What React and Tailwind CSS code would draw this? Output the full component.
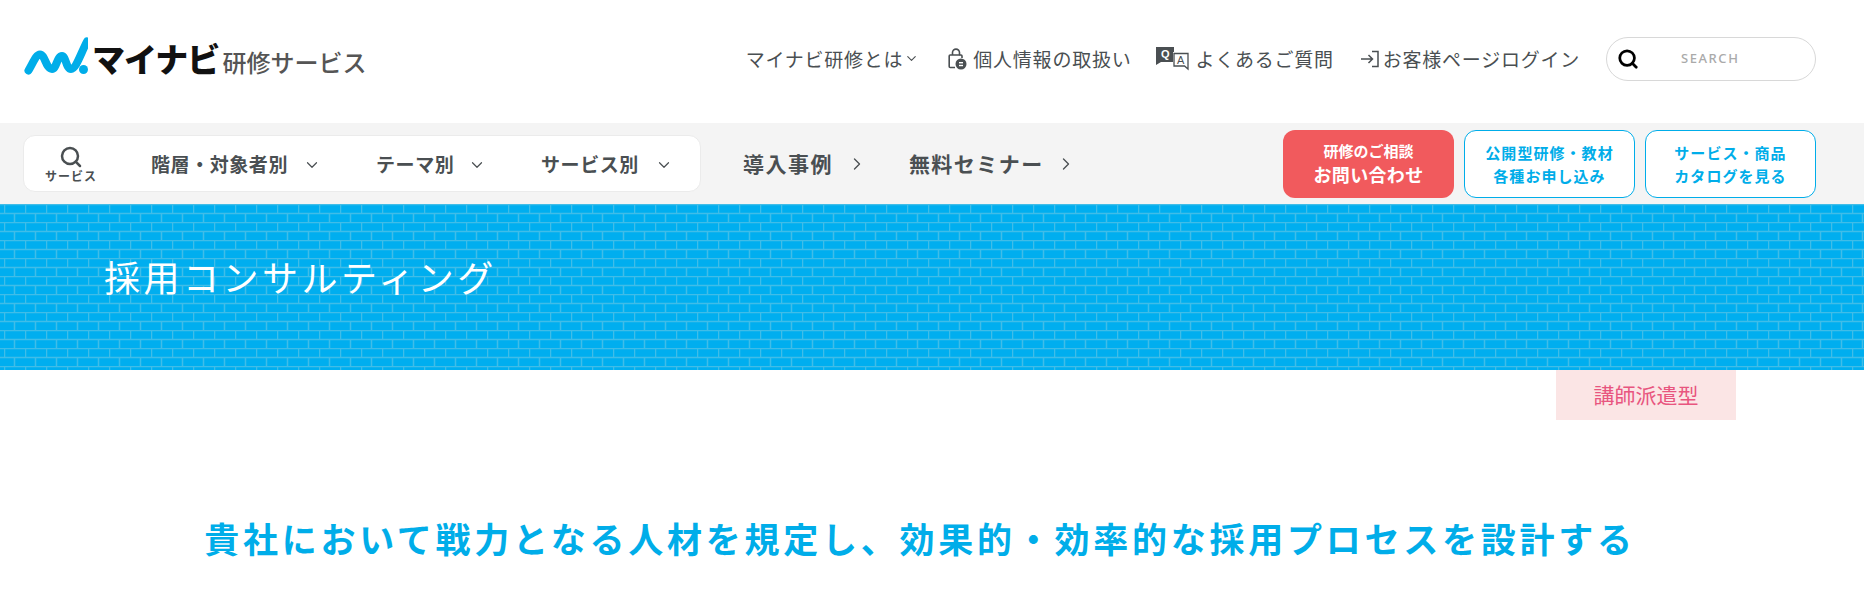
import React from "react";
import { Search, ChevronDown, ChevronRight } from "lucide-react";

function Logo() {
  return (
    <svg width="66" height="48" viewBox="20 36 66 48" className="shrink-0 mb-[3px]">
      <path d="M26.5 73.5 C31 66 34 57.5 38 57.5 C43 57.5 44 72 50 72 C54.5 72 55 59 60 59 C64 59 64 72 69 72 C74 72 79 56 85 44.5" fill="none" stroke="#00ade9" strokeWidth="8" strokeLinecap="round" strokeLinejoin="round" />
      <circle cx="81.5" cy="72.5" r="4.5" fill="#00ade9" />
    </svg>
  );
}

function LockIcon() {
  return (
    <svg width="20" height="22" viewBox="0 0 20 22" className="shrink-0">
      <path d="M8 7H3.2a1 1 0 0 0-1 1v10.5a1 1 0 0 0 1 1H8" fill="none" stroke="#4a4f52" strokeWidth="1.6" />
      <path d="M5.5 7V4.6a3.5 3.5 0 0 1 7 0V7H8" fill="none" stroke="#4a4f52" strokeWidth="1.6" />
      <path d="M12.5 7h1.5a1 1 0 0 1 1 1v2" fill="none" stroke="#4a4f52" strokeWidth="1.6" />
      <circle cx="14" cy="16" r="5.5" fill="#4a4f52" />
      <rect x="12" y="14" width="4" height="1.4" fill="#fff" />
      <rect x="12" y="16.8" width="4" height="1.4" fill="#fff" />
    </svg>
  );
}

function QaIcon() {
  return (
    <svg width="36" height="25" viewBox="0 0 36 25" className="shrink-0">
      <path d="M1 1h18v3h-1v12H6l-5 3z" fill="#4a4f52" />
      <rect x="18" y="4" width="1" height="2" fill="#4a4f52" />
      <text x="6" y="12" fontSize="11" fontWeight="800" fill="#fff" fontFamily="'Liberation Sans',sans-serif">Q</text>
      <path d="M19 7.5h14v15.5l-3.5-3H19z" fill="#fff" stroke="#4a4f52" strokeWidth="1.3" />
      <text x="22" y="17.5" fontSize="11" fill="#4a4f52" fontFamily="'Liberation Sans',sans-serif">A</text>
    </svg>
  );
}

function LoginIcon() {
  return (
    <svg width="20" height="20" viewBox="0 0 20 20" className="shrink-0">
      <path d="M1 10h11M8.5 6l4 4-4 4" fill="none" stroke="#4a4f52" strokeWidth="1.5" />
      <path d="M12 2.5h6v15h-6" fill="none" stroke="#4a4f52" strokeWidth="1.5" />
    </svg>
  );
}

function Bricks() {
  return (
    <svg className="absolute inset-0 w-full h-full" aria-hidden="true">
      <defs>
        <pattern id="bricks" x="4" y="0" width="21" height="18" patternUnits="userSpaceOnUse">
          <rect width="21" height="18" fill="#00aeef" />
          <path d="M0 0.5H21M0 9.5H21M0.5 0V9M10.5 9V18" stroke="#40bde8" strokeWidth="1.5" fill="none" />
        </pattern>
      </defs>
      <rect width="100%" height="100%" fill="url(#bricks)" />
    </svg>
  );
}

function NavItem({ label, w }) {
  return (
    <div className={`flex items-center justify-between ${w}`}>
      <span>{label}</span>
      <ChevronDown size={18} strokeWidth={1.6} />
    </div>
  );
}

export default function App() {
  return (
    <div className="h-[593px] overflow-hidden bg-white text-[#4a4f52] font-['Noto_Sans_CJK_JP','Noto_Sans',sans-serif]">
      <header className="h-[123px] flex items-center justify-between pl-[22px] pr-[48px] pb-[6px]">
        <div className="flex items-center">
          <Logo />
          <span className="ml-[4px] text-[33px] leading-none font-black tracking-[-0.03em] text-[#111]">マイナビ</span>
          <span className="ml-[3px] mt-[6px] text-[24px] leading-none font-medium tracking-[0] text-[#555]">研修サービス</span>
        </div>
        <div className="flex items-center text-[19px] tracking-[0.04em] leading-none">
          <div className="flex items-center">
            <span>マイナビ研修とは</span>
            <ChevronDown size={15} strokeWidth={1.8} className="ml-[1px]" />
          </div>
          <div className="flex items-center gap-[6px] ml-[28px]">
            <LockIcon />
            <span>個人情報の取扱い</span>
          </div>
          <div className="flex items-center gap-[4px] ml-[24px]">
            <QaIcon />
            <span>よくあるご質問</span>
          </div>
          <div className="flex items-center gap-[3px] ml-[26px]">
            <LoginIcon />
            <span>お客様ページログイン</span>
          </div>
          <div className="ml-[26px] w-[210px] h-[44px] rounded-full border border-[#d8d8d8] flex items-center pl-[10px]">
            <Search size={22} strokeWidth={3} className="text-black" />
            <span className="ml-[42px] text-[13px] font-medium tracking-[0.12em] text-[#aaa] font-['Noto_Sans',sans-serif]">SEARCH</span>
          </div>
        </div>
      </header>

      <div className="h-[81px] bg-[#f4f4f4] flex items-center pl-[23px] pr-[48px] justify-between">
        <div className="flex items-center font-bold">
          <div className="w-[678px] h-[57px] bg-white rounded-[12px] border border-[#ebebeb] flex items-center text-[19px] tracking-[0.03em]">
            <div className="flex flex-col items-center w-[94px] shrink-0">
              <Search size={24} strokeWidth={2.5} />
              <span className="text-[12px] leading-none tracking-[0.08em] mt-[1px]">サービス</span>
            </div>
            <div className="ml-[33px] pt-[2px]"><NavItem label="階層・対象者別" w="w-[170px]" /></div>
            <div className="ml-[55px] pt-[2px]"><NavItem label="テーマ別" w="w-[110px]" /></div>
            <div className="ml-[55px] pt-[2px]"><NavItem label="サービス別" w="w-[132px]" /></div>
          </div>
          <div className="ml-[42px] flex items-center text-[21px] tracking-[0.07em] pt-[1px]">
            <span>導入事例</span>
            <ChevronRight size={20} strokeWidth={1.6} className="ml-[14px]" />
          </div>
          <div className="ml-[42px] flex items-center text-[21px] tracking-[0.07em] pt-[1px]">
            <span>無料セミナー</span>
            <ChevronRight size={20} strokeWidth={1.6} className="ml-[12px]" />
          </div>
        </div>
        <div className="flex items-center gap-[10px] font-bold text-center">
          <div className="w-[171px] h-[68px] rounded-[12px] bg-[#f15a5d] text-white flex flex-col items-center justify-center">
            <span className="text-[15px] leading-[20px]">研修のご相談</span>
            <span className="text-[18px] leading-[26px] tracking-[0.02em]">お問い合わせ</span>
          </div>
          <div className="w-[171px] h-[68px] rounded-[12px] bg-white border border-[#00ade9] text-[#00ade9] flex flex-col items-center justify-center text-[15px] leading-[23px] tracking-[0.07em]">
            <span>公開型研修・教材</span>
            <span>各種お申し込み</span>
          </div>
          <div className="w-[171px] h-[68px] rounded-[12px] bg-white border border-[#00ade9] text-[#00ade9] flex flex-col items-center justify-center text-[15px] leading-[23px] tracking-[0.07em]">
            <span>サービス・商品</span>
            <span>カタログを見る</span>
          </div>
        </div>
      </div>

      <div className="relative h-[166px] flex items-center pl-[104px] pb-[23px]">
        <Bricks />
        <h1 className="relative text-[36px] leading-none tracking-[3.5px] text-white">採用コンサルティング</h1>
      </div>

      <div className="flex justify-end pr-[128px]">
        <div className="w-[180px] h-[50px] bg-[#fbe5e5] text-[#e8557f] text-[21px] flex items-center justify-center">講師派遣型</div>
      </div>

      <h2 className="mt-[94px] pr-[24px] text-center text-[35px] leading-[48px] font-bold tracking-[3.75px] text-[#00ade9]">貴社において戦力となる人材を規定し、効果的・効率的な採用プロセスを設計する</h2>
    </div>
  );
}
